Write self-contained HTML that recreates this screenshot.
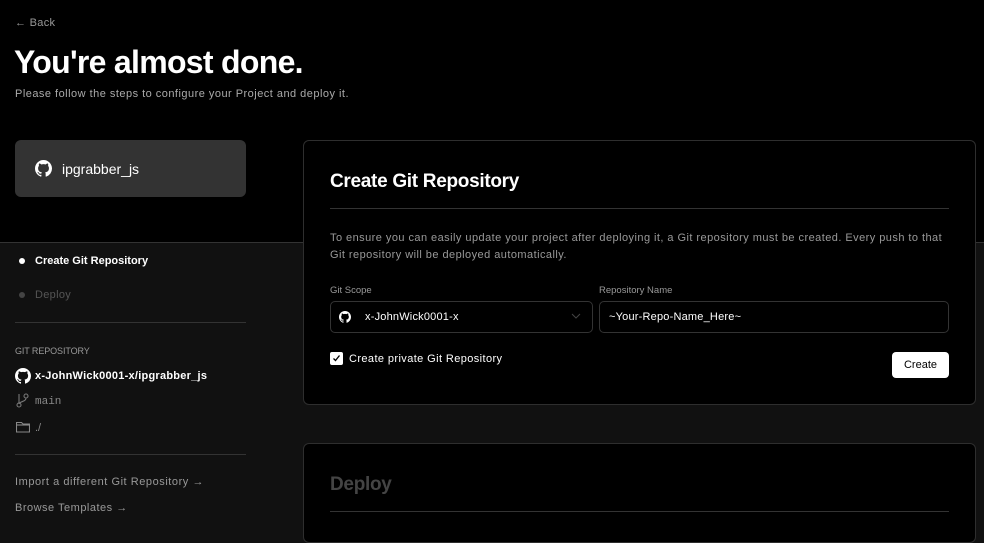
<!DOCTYPE html>
<html><head><meta charset="utf-8"><style>
*{margin:0;padding:0;box-sizing:border-box}
body{width:984px;height:520px;overflow:hidden;background:#111;font-family:"Liberation Sans",sans-serif;position:relative;color:#fff}
.a{position:absolute;white-space:nowrap}
.top{position:absolute;left:0;top:0;width:984px;height:243px;background:#000;border-bottom:1px solid #333}
.card{position:absolute;left:303px;width:673px;background:#000;border:1px solid #2e2e2e;border-radius:6px}
.hr{position:absolute;height:1px;background:#333}
</style></head><body>
<div class="top"></div>
<div class="a" style="left:15px;top:17px;font-size:11px;color:#999;letter-spacing:0.3px">← Back</div>
<div class="a" style="left:14px;top:44px;font-size:32px;font-weight:bold;letter-spacing:-0.7px">You're almost done.</div>
<div class="a" style="left:15px;top:88px;font-size:11px;color:#aaa;letter-spacing:0.48px">Please follow the steps to configure your Project and deploy it.</div>

<div class="a" style="left:15px;top:140px;width:231px;height:57px;background:#333;border-radius:6px"></div>
<svg class="a" style="left:35px;top:160px" width="17" height="17" viewBox="0 0 16 16"><path fill="#fff" d="M8 0C3.58 0 0 3.58 0 8c0 3.54 2.29 6.53 5.47 7.59.4.07.55-.17.55-.38v-1.33c-2.23.48-2.7-1.07-2.7-1.07-.36-.92-.89-1.17-.89-1.17-.73-.5.05-.49.05-.49.8.06 1.23.83 1.23.83.72 1.23 1.88.87 2.34.67.07-.52.28-.87.51-1.07-1.78-.2-3.64-.89-3.64-3.95 0-.87.31-1.59.82-2.15-.08-.2-.36-1.02.08-2.12 0 0 .67-.21 2.2.82a7.6 7.6 0 014 0c1.53-1.04 2.2-.82 2.2-.82.44 1.1.16 1.92.08 2.12.51.56.82 1.27.82 2.15 0 3.07-1.87 3.75-3.65 3.95.29.25.54.73.54 1.48v2.2c0 .21.15.46.55.38A8.01 8.01 0 0016 8c0-4.42-3.58-8-8-8z"/></svg>
<div class="a" style="left:62px;top:161px;font-size:14px">ipgrabber_js</div>

<div class="a" style="left:19px;top:258px;width:6px;height:6px;border-radius:50%;background:#fff"></div>
<div class="a" style="left:35px;top:255px;font-size:11px;font-weight:bold">Create Git Repository</div>
<div class="a" style="left:19px;top:292px;width:6px;height:6px;border-radius:50%;background:#444"></div>
<div class="a" style="left:35px;top:289px;font-size:11px;color:#555;letter-spacing:0.3px">Deploy</div>
<div class="hr" style="left:15px;top:322px;width:231px"></div>
<div class="a" style="left:15px;top:346px;font-size:9px;color:#999;letter-spacing:-0.1px">GIT REPOSITORY</div>
<svg class="a" style="left:15px;top:368px" width="16" height="16" viewBox="0 0 16 16"><path fill="#fff" d="M8 0C3.58 0 0 3.58 0 8c0 3.54 2.29 6.53 5.47 7.59.4.07.55-.17.55-.38v-1.33c-2.23.48-2.7-1.07-2.7-1.07-.36-.92-.89-1.17-.89-1.17-.73-.5.05-.49.05-.49.8.06 1.23.83 1.23.83.72 1.23 1.88.87 2.34.67.07-.52.28-.87.51-1.07-1.78-.2-3.64-.89-3.64-3.95 0-.87.31-1.59.82-2.15-.08-.2-.36-1.02.08-2.12 0 0 .67-.21 2.2.82a7.6 7.6 0 014 0c1.53-1.04 2.2-.82 2.2-.82.44 1.1.16 1.92.08 2.12.51.56.82 1.27.82 2.15 0 3.07-1.87 3.75-3.65 3.95.29.25.54.73.54 1.48v2.2c0 .21.15.46.55.38A8.01 8.01 0 0016 8c0-4.42-3.58-8-8-8z"/></svg>
<div class="a" style="left:35px;top:370px;font-size:11px;font-weight:bold;letter-spacing:0.25px">x-JohnWick0001-x/ipgrabber_js</div>
<svg class="a" style="left:16px;top:393px" width="14" height="15" viewBox="0 0 14 15" fill="none" stroke="#777" stroke-width="1.1"><path d="M3 1v9"/><circle cx="3" cy="12" r="2"/><circle cx="10" cy="3" r="2"/><path d="M10 5c0 4-6 3-7 6"/></svg>
<div class="a" style="left:35px;top:396px;font-size:11px;color:#888;font-family:'Liberation Mono',monospace">main</div>
<svg class="a" style="left:16px;top:421px" width="14" height="12" viewBox="0 0 14 12" fill="none" stroke="#888" stroke-width="1.1"><path d="M.5 1.5h5l1.5 1.5h6.5v8H.5z"/><path d="M.5 4h13"/></svg>
<div class="a" style="left:35px;top:422px;font-size:11px;color:#888">./</div>
<div class="hr" style="left:15px;top:454px;width:231px"></div>
<div class="a" style="left:15px;top:476px;font-size:11px;color:#999;letter-spacing:0.55px">Import a different Git Repository →</div>
<div class="a" style="left:15px;top:502px;font-size:11px;color:#999;letter-spacing:0.5px">Browse Templates →</div>

<div class="card" style="top:140px;height:265px"></div>
<div class="a" style="left:330px;top:171px;font-size:19px;font-weight:bold;letter-spacing:-0.3px">Create Git Repository</div>
<div class="hr" style="left:330px;top:208px;width:619px"></div>
<div class="a" style="left:330px;top:230px;font-size:11px;color:#999;line-height:17px;letter-spacing:0.45px">To ensure you can easily update your project after deploying it, a Git repository must be created. Every push to that<br>Git repository will be deployed automatically.</div>
<div class="a" style="left:330px;top:285px;font-size:9.5px;color:#999">Git Scope</div>
<div class="a" style="left:599px;top:285px;font-size:9.5px;color:#999">Repository Name</div>
<div class="a" style="left:330px;top:301px;width:263px;height:32px;border:1px solid #333;border-radius:5px"></div>
<svg class="a" style="left:339px;top:311px" width="12" height="12" viewBox="0 0 16 16"><path fill="#fff" d="M8 0C3.58 0 0 3.58 0 8c0 3.54 2.29 6.53 5.47 7.59.4.07.55-.17.55-.38v-1.33c-2.23.48-2.7-1.07-2.7-1.07-.36-.92-.89-1.17-.89-1.17-.73-.5.05-.49.05-.49.8.06 1.23.83 1.23.83.72 1.23 1.88.87 2.34.67.07-.52.28-.87.51-1.07-1.78-.2-3.64-.89-3.64-3.95 0-.87.31-1.59.82-2.15-.08-.2-.36-1.02.08-2.12 0 0 .67-.21 2.2.82a7.6 7.6 0 014 0c1.53-1.04 2.2-.82 2.2-.82.44 1.1.16 1.92.08 2.12.51.56.82 1.27.82 2.15 0 3.07-1.87 3.75-3.65 3.95.29.25.54.73.54 1.48v2.2c0 .21.15.46.55.38A8.01 8.01 0 0016 8c0-4.42-3.58-8-8-8z"/></svg>
<div class="a" style="left:365px;top:311px;font-size:11px;letter-spacing:0.2px">x-JohnWick0001-x</div>
<svg class="a" style="left:571px;top:313px" width="10" height="6" viewBox="0 0 10 6" fill="none" stroke="#444"><path d="M1 1l4 4 4-4"/></svg>
<div class="a" style="left:599px;top:301px;width:350px;height:32px;border:1px solid #333;border-radius:5px"></div>
<div class="a" style="left:609px;top:311px;font-size:11px;letter-spacing:0.2px">~Your-Repo-Name_Here~</div>
<div class="a" style="left:330px;top:352px;width:13px;height:13px;background:#fff;border-radius:2px"></div>
<svg class="a" style="left:332px;top:354px" width="9" height="9" viewBox="0 0 9 9" fill="none" stroke="#000" stroke-width="1.3"><path d="M1.5 4.5l2 2 4-5"/></svg>
<div class="a" style="left:349px;top:353px;font-size:11px;letter-spacing:0.4px">Create private Git Repository</div>
<div class="a" style="left:892px;top:352px;width:57px;height:26px;background:#fff;border-radius:4px;color:#000;font-size:11px;text-align:center;line-height:26px">Create</div>

<div class="card" style="top:443px;height:100px"></div>
<div class="a" style="left:330px;top:474px;font-size:19px;font-weight:bold;color:#444;letter-spacing:-0.3px">Deploy</div>
<div class="hr" style="left:330px;top:511px;width:619px"></div>
</body></html>
